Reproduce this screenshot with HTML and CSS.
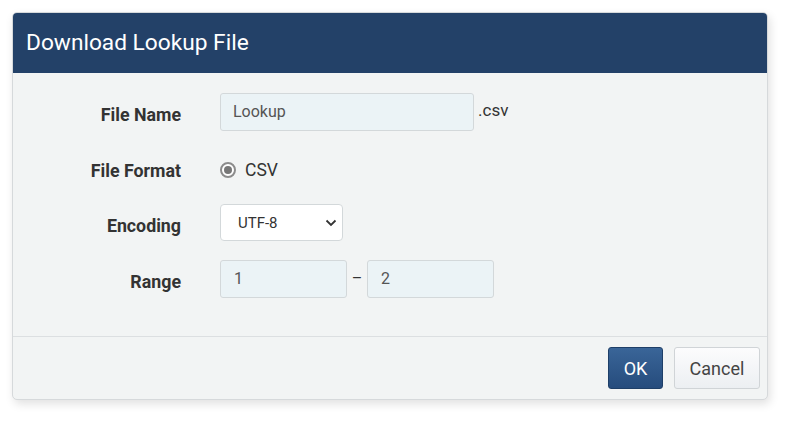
FILE: index.html
```html
<!DOCTYPE html>
<html lang="en">
<head>
    <meta charset="UTF-8">
    <title>Download Lookup File</title>
    <link rel="stylesheet" href="styles.css">
</head>
<body>
<div class="dialog">
    <div class="dialog_header">Download Lookup File</div>

    <div class="dialog_body">
        <div class="row row_name">
            <label class="row_label" for="filename">File Name</label>
            <input type="text" id="filename" class="text_input input_name" value="Lookup">
            <span class="suffix">.csv</span>
        </div>
        <div class="row row_format">
            <span class="row_label">File Format</span>
            <label class="radio">
                <span class="radio_dot"></span>
                CSV
            </label>
        </div>
        <div class="row row_encoding">
            <label class="row_label" for="encoding">Encoding</label>
            <div class="select">
                <span>UTF-8</span>
                <svg width="12" height="8" viewBox="0 0 12 8">
                    <path d="M1.5 1.5 L6 6 L10.5 1.5" fill="none" stroke="#333" stroke-width="1.8"/>
                </svg>
            </div>
        </div>
        <div class="row row_range">
            <span class="row_label">Range</span>
            <input type="text" class="text_input input_range" value="1">
            <span class="dash">–</span>
            <input type="text" class="text_input input_range" value="2">
        </div>
    </div>

    <div class="dialog_footer">
        <button type="button" class="btn btn_ok">OK</button>
        <button type="button" class="btn btn_cancel">Cancel</button>
    </div>
</div>
</body>
</html>
```

FILE: styles.css
```css
body {
    margin: 0;
    background: #fff;
    font-family: Roboto, "Liberation Sans", sans-serif;
    color: #333;
}

.dialog {
    margin: 12px;
    width: 756px;
    height: 388px;
    box-sizing: border-box;
    background: #f2f4f4;
    border: 1px solid #d6d9db;
    border-radius: 5px;
    box-shadow: 2px 4px 10px rgba(0, 0, 0, 0.12);
    display: flex;
    flex-direction: column;
    overflow: hidden;
}

.dialog_header {
    height: 61px;
    flex-shrink: 0;
    background: #234168;
    color: #fff;
    font-size: 22.7px;
    display: flex;
    align-items: center;
    padding-left: 14px;
    margin: -1px -1px 0 -1px;
}

.dialog_body {
    flex: 1;
    padding-top: 20px;
    border-bottom: 1px solid #dcdfe1;
}

.row {
    display: flex;
    align-items: center;
    height: 37px;
}

.row_format {
    margin-top: 21px;
}

.row_encoding {
    margin-top: 16px;
}

.row_range {
    margin-top: 19px;
}

.row_label {
    width: 168px;
    flex-shrink: 0;
    text-align: right;
    font-weight: bold;
    font-size: 17.8px;
    color: #333;
    margin-right: 39px;
    padding-top: 5px;
}

.row_format .row_label {
    padding-top: 2px;
}

.text_input {
    box-sizing: border-box;
    height: 38px;
    background: #ebf3f6;
    border: 1px solid #d3d8da;
    border-radius: 3px;
    font-family: inherit;
    font-size: 16px;
    color: #555;
    padding: 0 12px;
}

.input_name {
    width: 254px;
}

.suffix {
    margin-left: 4px;
    font-size: 17px;
    position: relative;
    top: -2px;
}

.radio {
    display: flex;
    align-items: center;
    font-size: 17.5px;
    gap: 9px;
}

.radio_dot {
    width: 16px;
    height: 16px;
    box-sizing: border-box;
    border: 2px solid #8c8c8c;
    border-radius: 50%;
    display: flex;
    align-items: center;
    justify-content: center;
    background: #fff;
}

.radio_dot::after {
    content: "";
    width: 8px;
    height: 8px;
    border-radius: 50%;
    background: #777;
}

.select {
    box-sizing: border-box;
    width: 123px;
    height: 37px;
    background: #fff;
    border: 1px solid #d3d8da;
    border-radius: 4px;
    display: flex;
    align-items: center;
    justify-content: space-between;
    padding: 0 5px 0 17px;
    font-size: 15px;
    color: #333;
}

.input_range {
    width: 127px;
    padding-left: 13px;
}

.dash {
    width: 20px;
    text-align: center;
    font-size: 16px;
}

.dialog_footer {
    height: 62px;
    flex-shrink: 0;
    display: flex;
    justify-content: flex-end;
    align-items: center;
    gap: 11px;
    padding-right: 7px;
}

.btn {
    height: 42px;
    border-radius: 3px;
    font-family: inherit;
    font-size: 18px;
    padding: 0 14px;
    cursor: pointer;
}

.btn_ok {
    width: 55px;
    color: #fff;
    background: linear-gradient(#3a6598, #264c7d);
    border: 1px solid #1e3f68;
}

.btn_cancel {
    width: 86px;
    color: #444;
    background: linear-gradient(#fcfcfd, #eceff2);
    border: 1px solid #d0d4d7;
}
```
